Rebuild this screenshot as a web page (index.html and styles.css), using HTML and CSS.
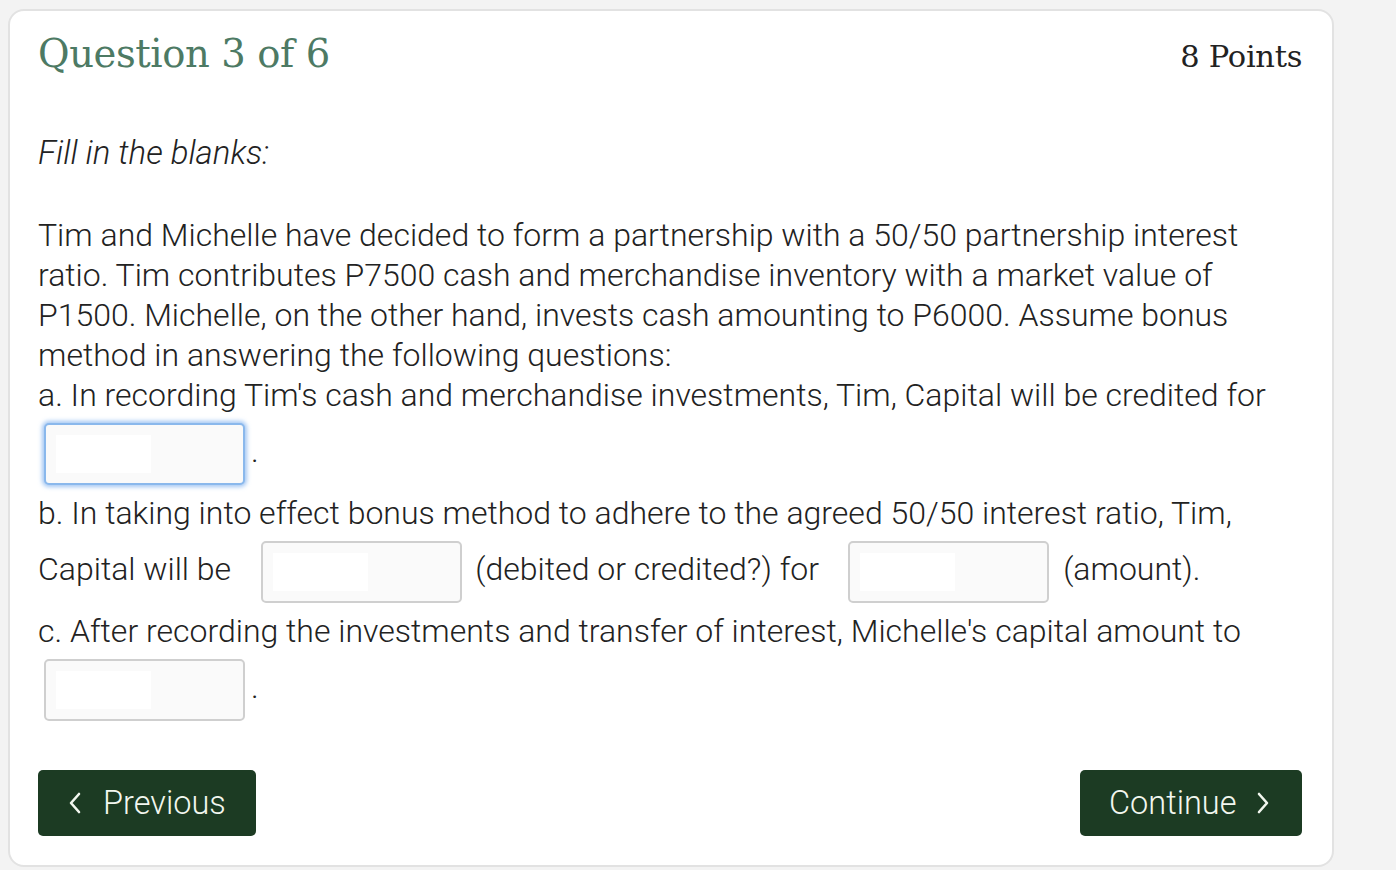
FILE: index.html
```html
<!DOCTYPE html>
<html lang="en">
<head>
<meta charset="utf-8">
<title>Question 3 of 6</title>
<link rel="stylesheet" href="styles.css">
</head>
<body>
<div class="card">
  <div class="header">
    <h1 class="title">Question 3 of 6</h1>
    <div class="points">8 Points</div>
  </div>
  <p class="instructions">Fill in the blanks:</p>
  <div class="question">
    <p class="para">Tim and Michelle have decided to form a partnership with a 50/50 partnership interest ratio. Tim contributes P7500 cash and merchandise inventory with a market value of P1500. Michelle, on the other hand, invests cash amounting to P6000. Assume bonus method in answering the following questions:</p>
    <p class="item item-a">a. In recording Tim's cash and merchandise investments, Tim, Capital will be credited for <span class="blank focused"><span class="fill"></span></span>.</p>
    <p class="item item-b">b. In taking into effect bonus method to adhere to the agreed 50/50 interest ratio, Tim, Capital will be&nbsp;&nbsp; <span class="blank"><span class="fill"></span></span> (debited or credited?) for&nbsp;&nbsp; <span class="blank"><span class="fill"></span></span> (amount).</p>
    <p class="item item-c">c. After recording the investments and transfer of interest, Michelle's capital amount to <span class="blank"><span class="fill"></span></span>.</p>
  </div>
  <div class="nav">
    <button class="btn prev"><svg class="chev" viewBox="0 0 14 24" width="14" height="24"><path d="M11 3 L3 12 L11 21" fill="none" stroke="currentColor" stroke-width="2.6" stroke-linecap="round" stroke-linejoin="round"/></svg><span>Previous</span></button>
    <button class="btn next"><span>Continue</span><svg class="chev" viewBox="0 0 14 24" width="14" height="24"><path d="M3 3 L11 12 L3 21" fill="none" stroke="currentColor" stroke-width="2.6" stroke-linecap="round" stroke-linejoin="round"/></svg></button>
  </div>
</div>
</body>
</html>
```
FILE: styles.css
```css
html, body {
  margin: 0;
  padding: 0;
  background: #f3f3f3;
}
body {
  font-family: Roboto, "Liberation Sans", sans-serif;
  color: #222;
}
.card {
  box-sizing: border-box;
  width: 1326px;
  height: 858px;
  margin: 9px 0 0 8px;
  background: #fff;
  border: 2px solid #e2e2e2;
  border-radius: 16px;
  padding: 17px 30px 0 28px;
  display: flex;
  flex-direction: column;
}
.header {
  display: flex;
  justify-content: space-between;
  align-items: baseline;
}
.title {
  margin: 0;
  font-family: "DejaVu Serif", "Liberation Serif", serif;
  font-weight: normal;
  font-size: 38.5px;
  line-height: 52px;
  color: #4d7a64;
  letter-spacing: -0.4px;
}
.points {
  font-family: "DejaVu Serif", "Liberation Serif", serif;
  font-size: 30.5px;
  color: #222;
  letter-spacing: -0.3px;
}
.instructions {
  margin: 53px 0 0 0;
  font-size: 33px;
  font-weight: 300;
  font-style: italic;
  line-height: 40px;
}
.question {
  margin-top: 42px;
  width: 1270px;
  font-size: 32px;
  font-weight: 300;
  line-height: 40px;
}
.question p {
  margin: 0;
}
.blank {
  display: inline-block;
  box-sizing: border-box;
  width: 201px;
  height: 62px;
  vertical-align: middle;
  background: #fafafa;
  border: 2px solid #cfcfcf;
  border-radius: 5px;
  margin: 8px 6px;
  position: relative;
}
.blank .fill {
  position: absolute;
  left: 10px;
  top: 10px;
  width: 95px;
  height: 38px;
  background: #fff;
}
.blank.focused {
  border-color: #8ab8ec;
  box-shadow: 0 0 4px 2px rgba(100, 160, 235, 0.6);
}
.nav {
  margin-top: auto;
  margin-bottom: 29px;
  display: flex;
  justify-content: space-between;
}
.btn {
  display: flex;
  align-items: center;
  height: 66px;
  border: none;
  border-radius: 5px;
  background: #1c3b23;
  color: #f2f7ef;
  font-family: Roboto, "Liberation Sans", sans-serif;
  font-size: 32.5px;
  font-weight: 300;
  cursor: pointer;
}
.btn.prev {
  width: 218px;
  padding: 0 0 0 30px;
  gap: 21px;
}
.btn.next {
  width: 222px;
  padding: 0 0 0 29px;
  gap: 20px;
}
.chev {
  flex: none;
}
```
